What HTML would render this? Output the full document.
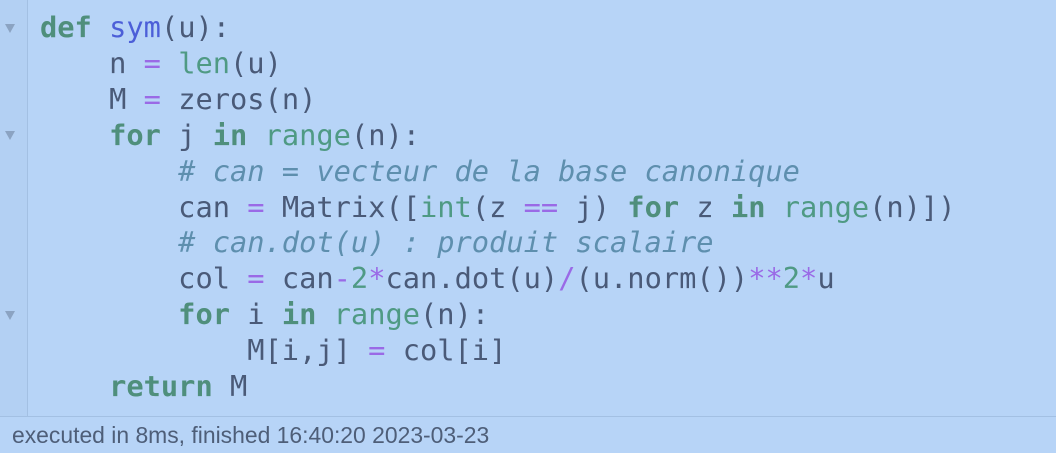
<!DOCTYPE html>
<html><head><style>
body{margin:0;width:1056px;height:452px;background:#b7d4f7;overflow:hidden;position:relative}
.gut{position:absolute;left:0;top:0;width:27px;height:416px;background:#b3d0f3;border-right:1px solid #a3c0e3}
.tri{position:absolute;left:5px;width:0;height:0;border-left:5px solid transparent;border-right:5px solid transparent;border-top:9px solid #8ba3c2}
pre{position:absolute;left:40px;top:10px;margin:0;font-family:"DejaVu Sans Mono","Liberation Mono",monospace;font-size:28.7px;line-height:35.9px;color:#4a5a78}
.k{color:#4f8f7c;font-weight:bold}.f{color:#4c5fd8}.b{color:#4f9a84}.o{color:#9a6ae6}.c{color:#5e8fae;font-style:italic}.n{color:#4f9a84}
.foot{position:absolute;left:0;top:416px;width:1056px;height:36px;border-top:1px solid #a3c0e3;background:#b7d4f7;font-family:"Liberation Sans",sans-serif;font-size:22.9px;color:#4e5e78;line-height:36px;padding-left:12px;box-sizing:border-box}
</style></head><body>
<div class="gut"></div>
<div class="tri" style="top:24px"></div>
<div class="tri" style="top:131px"></div>
<div class="tri" style="top:311px"></div>
<pre><span class="k">def</span> <span class="f">sym</span>(u):
    n <span class="o">=</span> <span class="b">len</span>(u)
    M <span class="o">=</span> zeros(n)
    <span class="k">for</span> j <span class="k">in</span> <span class="b">range</span>(n):
        <span class="c"># can = vecteur de la base canonique</span>
        can <span class="o">=</span> Matrix([<span class="b">int</span>(z <span class="o">==</span> j) <span class="k">for</span> z <span class="k">in</span> <span class="b">range</span>(n)])
        <span class="c"># can.dot(u) : produit scalaire</span>
        col <span class="o">=</span> can<span class="o">-</span><span class="n">2</span><span class="o">*</span>can.dot(u)<span class="o">/</span>(u.norm())<span class="o">**</span><span class="n">2</span><span class="o">*</span>u
        <span class="k">for</span> i <span class="k">in</span> <span class="b">range</span>(n):
            M[i,j] <span class="o">=</span> col[i]
    <span class="k">return</span> M</pre>
<div class="foot">executed in 8ms, finished 16:40:20 2023-03-23</div>
</body></html>
